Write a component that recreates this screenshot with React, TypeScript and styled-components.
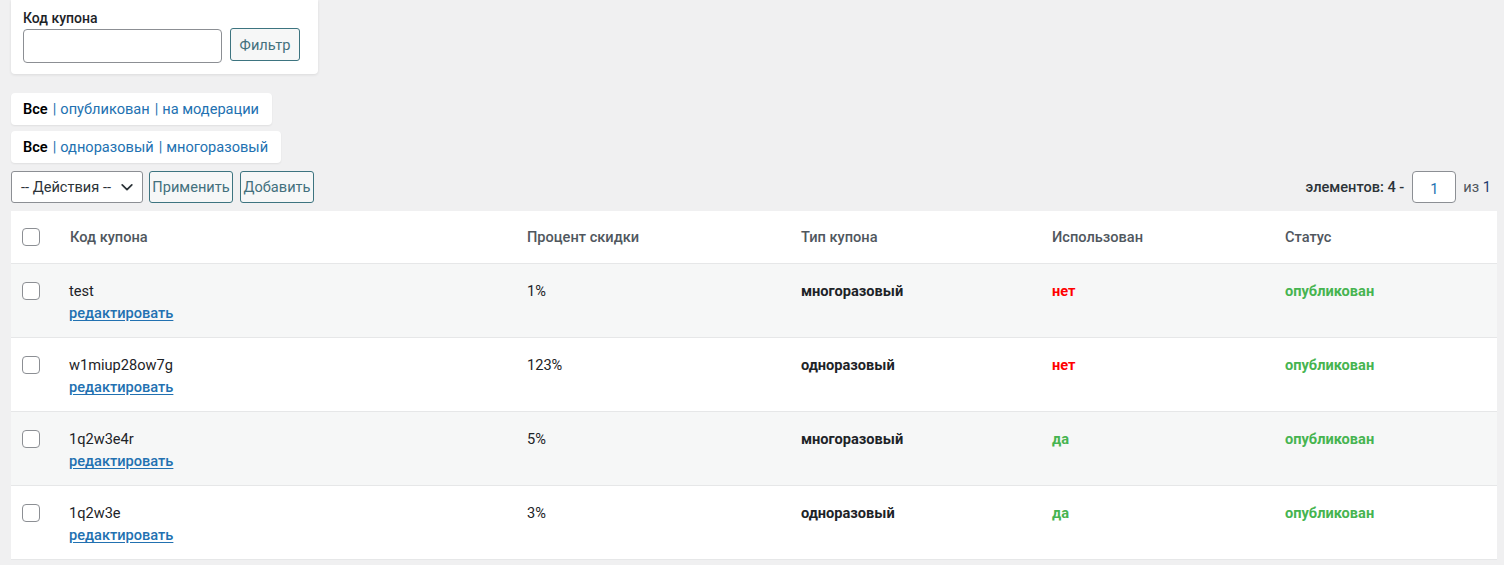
import React from "react";
import styled, { createGlobalStyle } from "styled-components";

const FS = "14.6px";

const Global = createGlobalStyle`
  html, body { margin: 0; padding: 0; background: #f0f0f1; }
  body { font-family: Roboto, "Noto Sans", Arial, sans-serif; font-size: ${FS}; color: #1d2327; }
  * { box-sizing: border-box; }
`;

const Page = styled.div`
  padding: 0 7px 0 11px;
  display: flex;
  flex-direction: column;
`;

const FilterCard = styled.div`
  width: 307px;
  height: 74px;
  background: #fff;
  border-radius: 0 0 4px 4px;
  box-shadow: 0 1px 3px rgba(0, 0, 0, 0.09);
  padding: 8px 0 0 12px;
`;

const Label = styled.div`
  font-size: 14px;
  font-weight: 500;
  line-height: 20px;
  color: #1d2327;
  margin-bottom: 1px;
`;

const FilterRow = styled.div`
  display: flex;
  align-items: flex-start;
  gap: 8px;
`;

const TextInput = styled.input`
  width: 199px;
  height: 34px;
  border: 1px solid #8c8f94;
  border-radius: 4px;
  background: #fff;
  font: inherit;
  padding: 0 8px;
`;

const Button = styled.button<{ $w: number }>`
  width: ${(p) => p.$w}px;
  height: 32px;
  border: 1px solid #3d7480;
  border-radius: 3px;
  background: #f6f7f7;
  color: #43707d;
  font-family: Roboto, Arial, sans-serif;
  font-size: ${FS};
  padding: 0;
  cursor: pointer;
  flex-shrink: 0;
`;

const FilterButton = styled(Button)`
  margin-top: -1px;
  height: 33px;
`;

const Views = styled.div<{ $w: number; $top: number }>`
  margin-top: ${(p) => p.$top}px;
  width: ${(p) => p.$w}px;
  height: 32px;
  background: #fff;
  border-radius: 4px;
  box-shadow: 0 1px 2px rgba(0, 0, 0, 0.07);
  display: flex;
  align-items: center;
  padding-left: 12px;
  font-size: ${FS};
  white-space: nowrap;
`;

const Current = styled.span`
  font-weight: 600;
  color: #000;
`;

const Sep = styled.span`
  color: #2271b1;
  margin: 0 4px 0 5px;
`;

const ViewLink = styled.a`
  color: #2271b1;
  text-decoration: none;
`;

const Toolbar = styled.div`
  margin-top: 8px;
  height: 32px;
  display: flex;
  align-items: center;
  gap: 6px;
`;

const SelectBox = styled.div`
  width: 132px;
  height: 32px;
  border: 1px solid #8c8f94;
  border-radius: 3px;
  background: #fff;
  display: flex;
  align-items: center;
  justify-content: space-between;
  padding: 0 8px 0 9px;
  color: #2c3338;
  font-size: ${FS};
`;

const Spacer = styled.div`
  flex: 1;
`;

const Pager = styled.div`
  display: flex;
  align-items: center;
  gap: 8px;
  padding-right: 6px;
  color: #2c3338;
  font-size: ${FS};
`;

const PagerText = styled.span`
  font-weight: 500;
`;

const PageInput = styled.div`
  width: 44px;
  height: 32px;
  border: 1px solid #8c8f94;
  border-radius: 4px;
  background: #fff;
  display: flex;
  align-items: center;
  justify-content: center;
  padding-top: 3px;
  color: #2271b1;
`;

const Total = styled.span`
  color: #50575e;
  margin-left: -1px;
`;

const TotalNum = styled.span`
  color: #1e3a6e;
`;

const Table = styled.div`
  margin-top: 8px;
  width: 1486px;
  background: #fff;
`;

const cols = "59px 457px 274px 251px 233px 1fr";

const HeadRow = styled.div`
  display: grid;
  grid-template-columns: ${cols};
  height: 53px;
  align-items: center;
  border-bottom: 1px solid #e6e7e8;
  color: #50575e;
  font-weight: 500;
  font-size: ${FS};
`;

const Row = styled.div<{ $odd: boolean }>`
  display: grid;
  grid-template-columns: ${cols};
  height: 74px;
  align-items: start;
  padding-top: 16px;
  background: ${(p) => (p.$odd ? "#f6f7f7" : "#fff")};
  border-bottom: 1px solid #e6e7e8;
  line-height: 22px;
  font-size: ${FS};
`;

const CheckCell = styled.div<{ $top: number }>`
  padding-left: 11px;
  padding-top: ${(p) => p.$top}px;
  display: flex;
`;

const Check = styled.span`
  width: 18px;
  height: 18px;
  border: 1px solid #8c8f94;
  border-radius: 4px;
  background: #fff;
  display: block;
`;

const Cell = styled.div`
  color: #1d2327;
`;

const CodeName = styled.div`
  color: #1d2327;
  margin-left: -1px;
`;

const EditLink = styled.a`
  display: block;
  margin-left: -1px;
  color: #2271b1;
  font-weight: 500;
  text-decoration: underline;
  text-underline-offset: 2px;
`;

const BoldCell = styled.div<{ $color?: string }>`
  font-weight: 700;
  color: ${(p) => p.$color || "#1d2327"};
`;

const rows = [
  { code: "test", pct: "1%", type: "многоразовый", used: false },
  { code: "w1miup28ow7g", pct: "123%", type: "одноразовый", used: false },
  { code: "1q2w3e4r", pct: "5%", type: "многоразовый", used: true },
  { code: "1q2w3e", pct: "3%", type: "одноразовый", used: true },
];

export default function App() {
  return (
    <>
      <Global />
      <Page>
        <FilterCard>
          <Label>Код купона</Label>
          <FilterRow>
            <TextInput />
            <FilterButton $w={70}>Фильтр</FilterButton>
          </FilterRow>
        </FilterCard>

        <Views $w={261} $top={19}>
          <Current>Все</Current>
          <Sep>|</Sep>
          <ViewLink href="#">опубликован</ViewLink>
          <Sep>|</Sep>
          <ViewLink href="#">на модерации</ViewLink>
        </Views>
        <Views $w={270} $top={6}>
          <Current>Все</Current>
          <Sep>|</Sep>
          <ViewLink href="#">одноразовый</ViewLink>
          <Sep>|</Sep>
          <ViewLink href="#">многоразовый</ViewLink>
        </Views>

        <Toolbar>
          <SelectBox>
            <span>-- Действия --</span>
            <svg width="14" height="14" viewBox="0 0 16 16" fill="none">
              <path d="M2.5 5.5 8 11l5.5-5.5" stroke="#2c3338" strokeWidth="2" strokeLinecap="round" strokeLinejoin="round" />
            </svg>
          </SelectBox>
          <Button $w={84}>Применить</Button>
          <Button $w={74} style={{ marginLeft: 1 }}>Добавить</Button>
          <Spacer />
          <Pager>
            <PagerText>элементов: 4 -</PagerText>
            <PageInput>1</PageInput>
            <Total>
              из <TotalNum>1</TotalNum>
            </Total>
          </Pager>
        </Toolbar>

        <Table>
          <HeadRow>
            <CheckCell $top={0}>
              <Check />
            </CheckCell>
            <div>Код купона</div>
            <div>Процент скидки</div>
            <div>Тип купона</div>
            <div>Использован</div>
            <div>Статус</div>
          </HeadRow>
          {rows.map((r, i) => (
            <Row key={r.code} $odd={i % 2 === 0}>
              <CheckCell $top={2}>
                <Check />
              </CheckCell>
              <div>
                <CodeName>{r.code}</CodeName>
                <EditLink href="#">редактировать</EditLink>
              </div>
              <Cell>{r.pct}</Cell>
              <BoldCell>{r.type}</BoldCell>
              <BoldCell $color={r.used ? "#46b450" : "#ff0000"}>{r.used ? "да" : "нет"}</BoldCell>
              <BoldCell $color="#46b450">опубликован</BoldCell>
            </Row>
          ))}
        </Table>
      </Page>
    </>
  );
}
